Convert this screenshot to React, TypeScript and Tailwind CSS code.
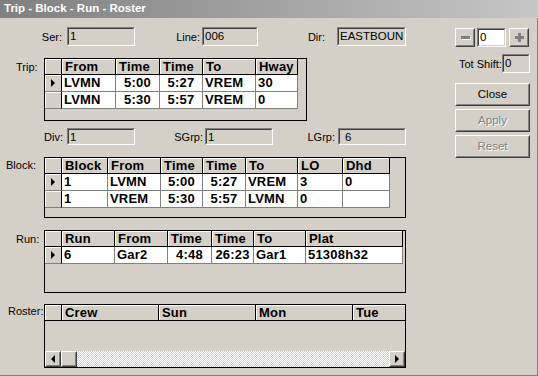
import React from "react";

type Col = { label: string; w: string; center?: boolean };

const tripCols: Col[] = [
	{ label: "From", w: "w-[54px]" },
	{ label: "Time", w: "w-[44px]", center: true },
	{ label: "Time", w: "w-[43px]", center: true },
	{ label: "To", w: "w-[53px]" },
	{ label: "Hway", w: "w-[42px]" },
];
const tripRows = [
	["LVMN", "5:00", "5:27", "VREM", "30"],
	["LVMN", "5:30", "5:57", "VREM", "0"],
];

const blockCols: Col[] = [
	{ label: "Block", w: "w-[46px]" },
	{ label: "From", w: "w-[53px]" },
	{ label: "Time", w: "w-[42px]", center: true },
	{ label: "Time", w: "w-[43px]", center: true },
	{ label: "To", w: "w-[52px]" },
	{ label: "LO", w: "w-[45px]" },
	{ label: "Dhd", w: "w-[47px]" },
];
const blockRows = [
	["1", "LVMN", "5:00", "5:27", "VREM", "3", "0"],
	["1", "VREM", "5:30", "5:57", "LVMN", "0", ""],
];

const runCols: Col[] = [
	{ label: "Run", w: "w-[53px]" },
	{ label: "From", w: "w-[53px]" },
	{ label: "Time", w: "w-[44px]", center: true },
	{ label: "Time", w: "w-[42px]", center: true },
	{ label: "To", w: "w-[52px]" },
	{ label: "Plat", w: "w-[97px]" },
];
const runRows = [["6", "Gar2", "4:48", "26:23", "Gar1", "51308h32"]];

const rosterCols: Col[] = [
	{ label: "Crew", w: "w-[97px]" },
	{ label: "Sun", w: "w-[97px]" },
	{ label: "Mon", w: "w-[97px]" },
	{ label: "Tue", w: "w-[97px]" },
];

// sunken 3d edit box
const Field: React.FC<{ value: string; className: string; white?: boolean; indent?: boolean }> = ({
	value,
	className,
	white,
	indent,
}) => (
	<div
		className={`${className} shrink-0 border border-t-[#808080] border-l-[#808080] border-b-white border-r-white ${
			white ? "bg-white" : "bg-[#d4d0c8]"
		}`}
	>
		<div
			className={`h-full overflow-hidden whitespace-nowrap border border-t-[#404040] border-l-[#404040] border-b-[#d4d0c8] border-r-[#d4d0c8] text-[11.5px] leading-[15px] text-black ${
				indent ? "pl-[5px]" : "pl-[1px]"
			}`}
		>
			{value}
		</div>
	</div>
);

const Raised: React.FC<{ className: string; children?: React.ReactNode }> = ({ className, children }) => (
	<div
		className={`${className} shrink-0 border border-t-white border-l-white border-b-[#404040] border-r-[#404040] bg-[#d4d0c8]`}
	>
		<div className="flex h-full items-center justify-center border border-t-[#d4d0c8] border-l-[#d4d0c8] border-b-[#808080] border-r-[#808080]">
			{children}
		</div>
	</div>
);

const Arrow: React.FC<{ dir: "left" | "right" }> = ({ dir }) => (
	<span
		className={
			dir === "right"
				? "h-0 w-0 border-y-[4px] border-l-[4px] border-y-transparent border-l-black"
				: "h-0 w-0 border-y-[4px] border-r-[4px] border-y-transparent border-r-black"
		}
	/>
);

const Grid: React.FC<{
	cols: Col[];
	rows: string[][];
	className: string;
	scroll?: boolean;
}> = ({ cols, rows, className, scroll }) => (
	<div className={`${className} flex shrink-0 flex-col overflow-hidden border border-black bg-[#d4d0c8]`}>
		<div className="flex h-[16px] shrink-0">
			<div className="h-full w-[17px] shrink-0 border-r border-b border-black bg-[#d4d0c8] shadow-[inset_1px_1px_0_#fff]" />
			{cols.map((c, i) => (
				<div
					key={i}
					className={`${c.w} h-full shrink-0 overflow-hidden whitespace-nowrap border-r border-b border-black bg-[#d4d0c8] pl-[3px] text-[13px] font-bold leading-[15px] tracking-[0.2px] shadow-[inset_1px_1px_0_#fff]`}
				>
					{c.label}
				</div>
			))}
		</div>
		{rows.map((r, ri) => (
			<div key={ri} className="flex h-[17px] shrink-0">
				<div className="flex h-full w-[17px] shrink-0 items-center justify-center border-r border-b border-r-black border-b-[#808080] bg-[#d4d0c8] shadow-[inset_1px_1px_0_#fff]">
					{ri === 0 && <Arrow dir="right" />}
				</div>
				{cols.map((c, ci) => (
					<div
						key={ci}
						className={`${c.w} h-full shrink-0 overflow-hidden whitespace-nowrap border-r border-b border-[#808080] bg-white px-[2px] text-[13px] font-bold leading-[16px] tracking-[0.2px] ${
							c.center ? "text-center" : "text-left"
						}`}
					>
						{r[ci]}
					</div>
				))}
			</div>
		))}
		<div className="flex-1" />
		{scroll && (
			<div className="flex h-[16px] shrink-0">
				<Raised className="h-[16px] w-[16px]">
					<Arrow dir="left" />
				</Raised>
				<Raised className="h-[16px] w-[16px]" />
				<div className="h-full flex-1 bg-[repeating-conic-gradient(#d4d0c8_0_25%,#ffffff_0_50%)] bg-[length:2px_2px]" />
				<Raised className="h-[16px] w-[16px]">
					<Arrow dir="right" />
				</Raised>
			</div>
		)}
	</div>
);

const Label: React.FC<{ className: string; children: React.ReactNode }> = ({ className, children }) => (
	<div className={`${className} shrink-0 text-[11px] leading-[14px] text-black`}>{children}</div>
);

export default function App() {
	return (
		<div className="h-[376px] w-[538px] overflow-hidden bg-[#d4d0c8] font-['Liberation_Sans',Arial,sans-serif] text-black">
			<div className="flex h-[18px] items-center bg-gradient-to-r from-[#808080] to-[#c6c6c6] pl-[4px] text-[11.5px] font-bold text-white">
				Trip - Block - Run - Roster
			</div>
			<div className="flex h-[358px] border-r border-b border-[#808080]">
				{/* left side: header fields and grids */}
				<div className="flex w-[410px] shrink-0 flex-col">
					<div className="mt-[9px] flex h-[19px] items-center">
						<Label className="w-[67px] pr-[5px] text-right">Ser:</Label>
						<Field value="1" className="h-[19px] w-[68px]" />
						<Label className="w-[67px] pr-[2px] text-right">Line:</Label>
						<Field value="006" className="h-[19px] w-[56px]" />
						<Label className="w-[79px] pr-[12px] text-right">Dir:</Label>
						<Field value="EASTBOUN" className="h-[19px] w-[69px]" />
					</div>

					<div className="mt-[12px] flex">
						<Label className="w-[44px] pl-[16px] pt-[2px]">Trip:</Label>
						<Grid cols={tripCols} rows={tripRows} className="h-[63px] w-[263px]" />
					</div>

					<div className="mt-[7px] flex h-[17px] items-center">
						<Label className="w-[67px] pr-[4px] text-right">Div:</Label>
						<Field value="1" className="h-[17px] w-[68px]" />
						<Label className="w-[70px] pr-[2px] text-right">SGrp:</Label>
						<Field value="1" className="h-[17px] w-[68px]" />
						<Label className="w-[65px] pr-[3px] text-right">LGrp:</Label>
						<Field value="6" className="h-[17px] w-[68px]" indent />
					</div>

					<div className="mt-[12px] flex">
						<Label className="w-[44px] pl-[6px] pt-[1px]">Block:</Label>
						<Grid cols={blockCols} rows={blockRows} className="h-[61px] w-[362px]" />
					</div>

					<div className="mt-[12px] flex">
						<Label className="w-[44px] pl-[16px] pt-[2px]">Run:</Label>
						<Grid cols={runCols} rows={runRows} className="h-[63px] w-[362px]" />
					</div>

					<div className="mt-[11px] flex">
						<Label className="w-[44px] pl-[8px]">Roster:</Label>
						<Grid cols={rosterCols} rows={[]} className="h-[64px] w-[362px]" scroll />
					</div>
				</div>

				{/* right side: shift spinner and buttons */}
				<div className="ml-[45px] mt-[10px] flex w-[76px] flex-col">
					<div className="flex h-[19px] items-center">
						<Raised className="h-[19px] w-[20px]">
							<span className="h-[3px] w-[9px] bg-[#808080] shadow-[1px_1px_0_#fff]" />
						</Raised>
						<Field value="0" className="ml-[2px] h-[19px] w-[29px]" white />
						<Raised className="ml-[3px] h-[19px] w-[20px]">
							<span className="relative flex h-[9px] w-[9px] items-center justify-center">
								<span className="absolute h-[3px] w-[9px] bg-[#808080]" />
								<span className="absolute h-[9px] w-[3px] bg-[#808080]" />
							</span>
						</Raised>
					</div>
					<div className="mt-[7px] flex h-[19px] items-center">
						<Label className="ml-[4px] w-[43px]">Tot Shift:</Label>
						<Field value="0" className="h-[19px] w-[28px]" />
					</div>
					<Raised className="mt-[10px] h-[23px] w-[75px]">
						<span className="text-[11.5px]">Close</span>
					</Raised>
					<Raised className="mt-[3px] h-[23px] w-[75px]">
						<span className="text-[11.5px] text-[#808080] [text-shadow:1px_1px_0_#fff]">Apply</span>
					</Raised>
					<Raised className="mt-[3px] h-[23px] w-[75px]">
						<span className="text-[11.5px] text-[#808080] [text-shadow:1px_1px_0_#fff]">Reset</span>
					</Raised>
				</div>
			</div>
		</div>
	);
}
